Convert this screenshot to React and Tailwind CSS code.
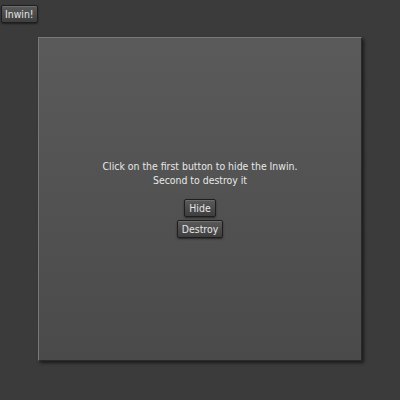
import React from 'react';

const btn =
  'border border-[#1e1e1e] bg-gradient-to-b from-[#5a5a5a] to-[#3e3e3e] text-[#e6e6e6] shadow-[inset_0_1px_0_#6e6e6e,0_1px_2px_rgba(0,0,0,0.5)] rounded-[2px] leading-none';

export default function App() {
  return (
    <div
      className="w-[400px] h-[400px] bg-[#3b3b3b] flex flex-col"
      style={{ fontFamily: '"DejaVu Sans Condensed", "DejaVu Sans", sans-serif' }}
    >
      <div className="pl-[1px] pt-[1px]">
        <button className={`${btn} text-[10.4px] px-[3px] h-[18px]`}>Inwin!</button>
      </div>

      {/* Inwin panel */}
      <div className="ml-[38px] mt-[12px] w-[324px] h-[324px] border-t border-l border-[#797979] border-r border-b border-r-[#2a2a2a] border-b-[#2a2a2a] bg-gradient-to-b from-[#5a5a5a] to-[#4a4a4a] shadow-[2px_2px_3px_rgba(0,0,0,0.55)] flex flex-col items-center pt-[121px]">
        <p className="text-[10.4px] text-[#e8e8e8] text-center leading-[14px]">
          Click on the first button to hide the Inwin.
          <br />
          Second to destroy it
        </p>
        <button className={`${btn} mt-[12px] text-[10.4px] px-[4px] h-[18px]`}>Hide</button>
        <button className={`${btn} mt-[3px] text-[10.4px] px-[4px] h-[18px]`}>Destroy</button>
      </div>
    </div>
  );
}
